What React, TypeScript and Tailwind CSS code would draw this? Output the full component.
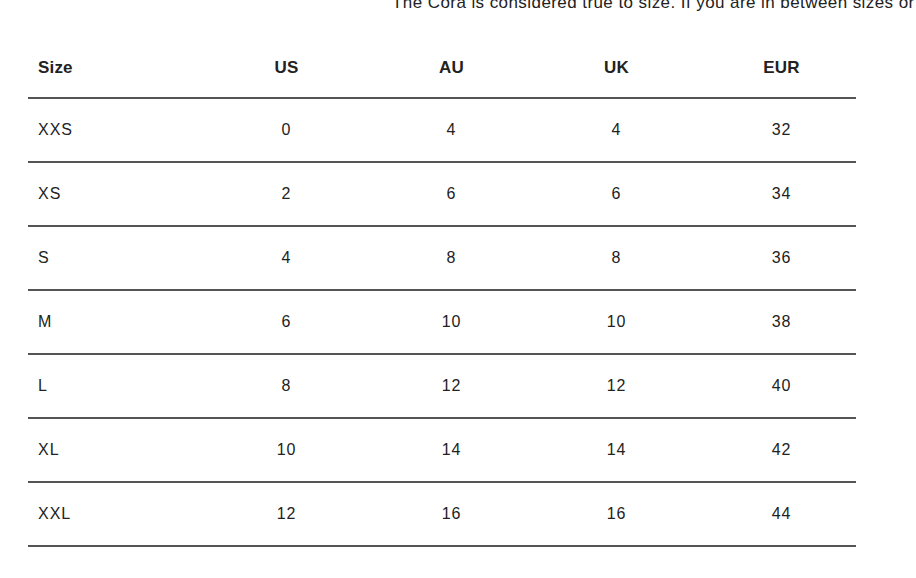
const rows = [
  ['XXS', '0', '4', '4', '32'],
  ['XS', '2', '6', '6', '34'],
  ['S', '4', '8', '8', '36'],
  ['M', '6', '10', '10', '38'],
  ['L', '8', '12', '12', '40'],
  ['XL', '10', '14', '14', '42'],
  ['XXL', '12', '16', '16', '44'],
];

const cols = 'grid grid-cols-[176px_165px_165px_165px_157px] items-center';

export default function App() {
  return (
    <div className="w-[916px] h-[578px] overflow-hidden bg-white text-[#222] font-['Liberation_Sans',Arial,sans-serif]">
      <p className="mt-[-7px] ml-[392px] whitespace-nowrap text-[17px] leading-[19px] tracking-[0.025em]">
        The Cora is considered true to size. If you are in between sizes or prefer a looser fit, we recommend sizing up.
      </p>
      <div className="ml-[28px] mt-[23px] w-[828px]">
        <div className={`${cols} h-[64px] pt-[4px] border-b-2 border-[#555] font-bold text-[17px] tracking-[0.01em]`}>
          <div className="pl-[10px]">Size</div>
          <div className="text-center">US</div>
          <div className="text-center">AU</div>
          <div className="text-center">UK</div>
          <div className="text-center pl-[8px]">EUR</div>
        </div>
        {rows.map((r) => (
          <div key={r[0]} className={`${cols} h-[64px] border-b-2 border-[#555] text-[16px] tracking-[0.06em]`}>
            <div className="pl-[10px]">{r[0]}</div>
            <div className="text-center">{r[1]}</div>
            <div className="text-center">{r[2]}</div>
            <div className="text-center">{r[3]}</div>
            <div className="text-center pl-[8px]">{r[4]}</div>
          </div>
        ))}
      </div>
    </div>
  );
}
